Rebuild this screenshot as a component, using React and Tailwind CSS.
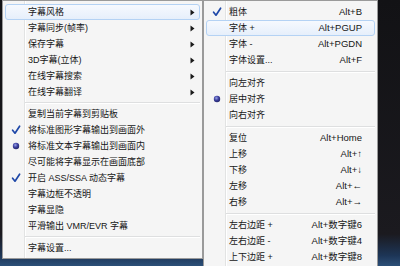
import React from "react";

const FONT = { fontFamily: '"Liberation Sans", "Noto Sans CJK SC", sans-serif' };

function Check() {
  return (
    <svg width="10" height="10" viewBox="0 0 10 10">
      <path d="M1.6 5.2 L4 8.2 L8.6 1.2" fill="none" stroke="#1f48a8" strokeWidth="1.7" strokeLinecap="round" strokeLinejoin="round" />
    </svg>
  );
}

function Radio() {
  return (
    <svg width="8" height="8" viewBox="0 0 8 8">
      <defs>
        <radialGradient id="rg" cx="40%" cy="35%" r="65%">
          <stop offset="0%" stopColor="#9aa3e8" />
          <stop offset="55%" stopColor="#3c3f9e" />
          <stop offset="100%" stopColor="#26296e" />
        </radialGradient>
      </defs>
      <circle cx="4" cy="4" r="3.2" fill="url(#rg)" />
    </svg>
  );
}

function Arrow() {
  return (
    <svg width="5" height="7" viewBox="0 0 5 7">
      <path d="M0.5 0.5 L4.5 3.5 L0.5 6.5 Z" fill="#1a1a1a" />
    </svg>
  );
}

function Item({ label, mark, hot, sub, keys, gutter }) {
  return (
    <div
      className={`flex h-[16px] items-center rounded-[3px] border ${
        hot
          ? "border-[#b4d2f4] bg-[linear-gradient(#f6f9fe,#e6effb)]"
          : "border-transparent"
      }`}
    >
      <div className={`flex shrink-0 items-center justify-center ${gutter}`}>
        {mark === "check" && <Check />}
        {mark === "radio" && <Radio />}
      </div>
      <span className="ml-[3px] whitespace-nowrap text-[9px] leading-none text-[#161616]">{label}</span>
      {sub && (
        <span className="ml-auto mr-[4px] flex items-center">
          <Arrow />
        </span>
      )}
      {keys && (
        <span className="ml-auto mr-[12px] whitespace-nowrap text-[9.5px] leading-none text-[#161616]">{keys}</span>
      )}
    </div>
  );
}

function Sep({ h, indent }) {
  return (
    <div className={`flex items-center ${h}`}>
      <div className={`h-[2px] flex-1 border-t border-b border-t-[#dedfe0] border-b-white ${indent}`} />
    </div>
  );
}

const left = [
  { label: "字幕风格", sub: true, hot: true },
  { label: "字幕同步(帧率)", sub: true },
  { label: "保存字幕", sub: true },
  { label: "3D字幕(立体)", sub: true },
  { label: "在线字幕搜索", sub: true },
  { label: "在线字幕翻译", sub: true },
  "sep",
  { label: "复制当前字幕到剪贴板" },
  { label: "将标准图形字幕输出到画面外", mark: "check" },
  { label: "将标准文本字幕输出到画面内", mark: "radio" },
  { label: "尽可能将字幕显示在画面底部" },
  { label: "开启 ASS/SSA 动态字幕", mark: "check" },
  { label: "字幕边框不透明" },
  { label: "字幕显隐" },
  { label: "平滑输出 VMR/EVR 字幕" },
  "sep",
  { label: "字幕设置..." },
];

const right = [
  { label: "粗体", mark: "check", keys: "Alt+B" },
  { label: "字体 +", keys: "Alt+PGUP", hot: true },
  { label: "字体 -", keys: "Alt+PGDN" },
  { label: "字体设置...", keys: "Alt+F" },
  "sep",
  { label: "向左对齐" },
  { label: "居中对齐", mark: "radio" },
  { label: "向右对齐" },
  "sep",
  { label: "复位", keys: "Alt+Home" },
  { label: "上移", keys: "Alt+↑" },
  { label: "下移", keys: "Alt+↓" },
  { label: "左移", keys: "Alt+←" },
  { label: "右移", keys: "Alt+→" },
  "sep",
  { label: "左右边距 +", keys: "Alt+数字键6" },
  { label: "左右边距 -", keys: "Alt+数字键4" },
  { label: "上下边距 +", keys: "Alt+数字键8" },
];

export default function App() {
  return (
    <div
      className="flex h-[266px] w-[400px] items-start overflow-hidden bg-[linear-gradient(#121215_0%,#1b1a1f_88%,#1d3556_96%,#2c4f78_100%)]"
      style={FONT}
    >
      {/* main context menu */}
      <div className="ml-[2px] h-[259px] w-[201px] shrink-0 border border-[#9a9a9a] bg-[linear-gradient(to_right,#f5f5f5_21px,#e2e3e3_21px,#e2e3e3_22px,#ffffff_22px,#ffffff_23px,#f5f5f5_23px)] px-[2px] pt-[3px]">
        {left.map((it, i) =>
          it === "sep" ? (
            <Sep key={i} h="h-[6px]" indent="ml-[20px]" />
          ) : (
            <Item key={i} {...it} gutter="w-[19px]" />
          )
        )}
      </div>

      {/* submenu: 字幕风格 */}
      <div className="h-[270px] w-[175px] shrink-0 border border-[#9a9a9a] bg-[linear-gradient(to_right,#f5f5f5_21px,#e2e3e3_21px,#e2e3e3_22px,#ffffff_22px,#ffffff_23px,#f5f5f5_23px)] px-[2px] pt-[3px]">
        {right.map((it, i) =>
          it === "sep" ? (
            <Sep key={i} h="h-[7px]" indent="ml-[20px]" />
          ) : (
            <Item key={i} {...it} gutter="w-[19px]" />
          )
        )}
      </div>
    </div>
  );
}
